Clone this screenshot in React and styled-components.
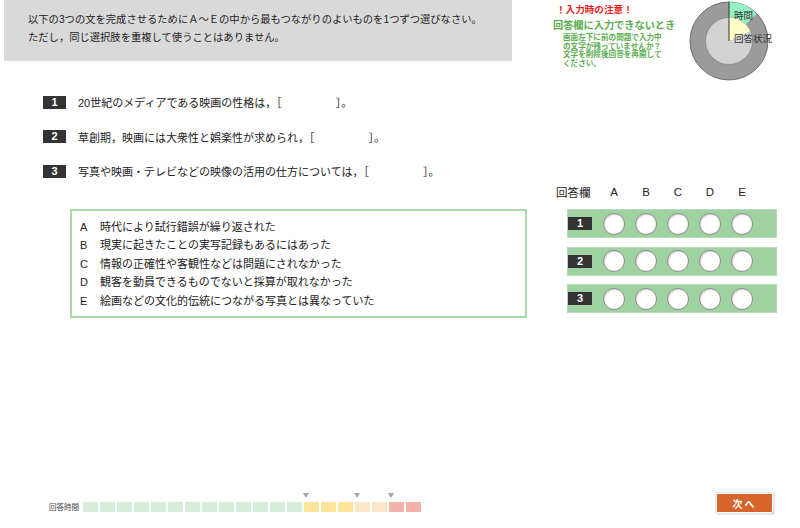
import React from 'react'
import styled, { createGlobalStyle } from 'styled-components'

const GlobalStyle = createGlobalStyle`
 html, body {
  margin: 0;
  padding: 0;
  background: #fff;
 }
 body {
  font-family: "Liberation Sans", "Noto Sans CJK JP", sans-serif;
  color: #222;
 }
`

const questions = [
 { no: 1, text: '20世紀のメディアである映画の性格は，［', tail: '］。' },
 { no: 2, text: '草創期，映画には大衆性と娯楽性が求められ，［', tail: '］。' },
 { no: 3, text: '写真や映画・テレビなどの映像の活用の仕方については，［', tail: '］。' },
]

const options = [
 ['A', '時代により試行錯誤が繰り返された'],
 ['B', '現実に起きたことの実写記録もあるにはあった'],
 ['C', '情報の正確性や客観性などは問題にされなかった'],
 ['D', '観客を動員できるものでないと採算が取れなかった'],
 ['E', '絵画などの文化的伝統につながる写真とは異なっていた'],
]

// 20 cells: green, then yellow, peach, red
const timeCells = [
 ...Array(13).fill('green'),
 ...Array(3).fill('yellow'),
 ...Array(2).fill('peach'),
 ...Array(2).fill('red'),
]
const marks = [13, 16, 18]

const cellColors = {
 green: '#d8ecda',
 yellow: '#fde69c',
 peach: '#fde6c9',
 red: '#f4b3aa',
}

const App = () => {
 return (
  <Page>
   <GlobalStyle />
   <Top>
    <Instruction>
     以下の3つの文を完成させるためにＡ～Ｅの中から最もつながりのよいものを1つずつ選びなさい。
     <br />
     ただし，同じ選択肢を重複して使うことはありません。
    </Instruction>
    <Notice>
     <NoticeTitle>！入力時の注意！</NoticeTitle>
     <NoticeHead>回答欄に入力できないとき</NoticeHead>
     <NoticeBody>
      画面左下に前の問題で入力中
      <br />
      の文字が残っていませんか？
      <br />
      文字を削除後回答を再開して
      <br />
      ください。
     </NoticeBody>
    </Notice>
    <Donut width="90" height="82" viewBox="0 0 90 82">
     <circle cx="40" cy="41" r="39" fill="#9b9b9b" stroke="#555" strokeWidth="0.8" />
     <path d="M40 2 A39 39 0 0 1 67.58 13.42 L56.62 24.38 A23.5 23.5 0 0 0 40 17.5 Z" fill="#93f2c2" />
     <circle cx="40" cy="41" r="23.5" fill="#d2d2d2" stroke="#7a7a7a" strokeWidth="0.6" />
     <path d="M40 41 L40 17.5 A23.5 23.5 0 0 1 61.3 31.06 Z" fill="#fdfdc4" />
     <line x1="40" y1="41" x2="40" y2="2" stroke="#222" strokeWidth="0.9" />
     <text x="45" y="18.5" fontSize="9.5" fill="#333">時間</text>
     <text x="45" y="41.5" fontSize="9.5" fill="#333">回答状況</text>
    </Donut>
   </Top>

   <Main>
    <Left>
     {questions.map((q) => (
      <QuestionRow key={q.no}>
       <NumBox>{q.no}</NumBox>
       <QuestionText>
        {q.text}
        <Blank />
        {q.tail}
       </QuestionText>
      </QuestionRow>
     ))}
     <OptionBox>
      {options.map(([k, t]) => (
       <OptionRow key={k}>
        <OptionKey>{k}</OptionKey>
        <span>{t}</span>
       </OptionRow>
      ))}
     </OptionBox>
    </Left>

    <Right>
     <GridHead>
      <GridLabel>回答欄</GridLabel>
      {['A', 'B', 'C', 'D', 'E'].map((l) => (
       <GridLetter key={l}>{l}</GridLetter>
      ))}
     </GridHead>
     {[1, 2, 3].map((n) => (
      <AnswerBar key={n}>
       <BarNum>{n}</BarNum>
       <Circles>
        {[0, 1, 2, 3, 4].map((i) => (
         <Circle key={i} />
        ))}
       </Circles>
      </AnswerBar>
     ))}
    </Right>
   </Main>

   <Footer>
    <Timer>
     <TimerLabel>回答時間</TimerLabel>
     <Cells>
      {timeCells.map((c, i) => (
       <Cell key={i} $color={cellColors[c]} $mark={marks.includes(i)} />
      ))}
     </Cells>
    </Timer>
    <NextButton type="button">次へ</NextButton>
   </Footer>
  </Page>
 )
}

const Page = styled.div`
 width: 800px;
 height: 528px;
 display: flex;
 flex-direction: column;
 overflow: hidden;
`

const Top = styled.div`
 display: flex;
 align-items: flex-start;
 height: 61px;
`

const Instruction = styled.div`
 margin-left: 4px;
 width: 508px;
 height: 61px;
 box-sizing: border-box;
 background: #d9d9d9;
 padding: 11px 0 0 24px;
 font-size: 10.3px;
 line-height: 18px;
 color: #222;
 white-space: nowrap;
`

const Notice = styled.div`
 margin-left: 41px;
 padding-top: 4px;
 width: 135px;
`

const NoticeTitle = styled.div`
 color: #ee1c1c;
 font-weight: bold;
 font-size: 9.6px;
 line-height: 12px;
 padding-left: 3px;
`

const NoticeHead = styled.div`
 color: #5aae4e;
 font-weight: bold;
 font-size: 10.2px;
 line-height: 16px;
 margin-top: 2px;
 white-space: nowrap;
`

const NoticeBody = styled.div`
 color: #5aae4e;
 font-weight: bold;
 font-size: 7.6px;
 line-height: 8.7px;
 padding-left: 10px;
 white-space: nowrap;
`

const Donut = styled.svg`
 margin-left: 1px;
 display: block;
 overflow: visible;
`

const Main = styled.div`
 display: flex;
 align-items: flex-start;
`

const Left = styled.div`
 width: 556px;
 padding: 24px 0 0 43px;
 box-sizing: border-box;
`

const QuestionRow = styled.div`
 display: flex;
 align-items: center;
 height: 34.5px;
`

const NumBox = styled.div`
 width: 23px;
 height: 13px;
 background: #333;
 color: #fff;
 font-weight: bold;
 font-size: 11px;
 line-height: 13px;
 text-align: center;
 margin-right: 12px;
`

const QuestionText = styled.div`
 font-size: 11px;
 color: #222;
 white-space: nowrap;
`

const Blank = styled.span`
 display: inline-block;
 width: 54px;
`

const OptionBox = styled.div`
 margin: 20px 0 0 27px;
 width: 457px;
 height: 109px;
 box-sizing: border-box;
 border: 2px solid #a9d9a9;
 padding: 7px 0 0 8px;
`

const OptionRow = styled.div`
 display: flex;
 font-size: 11px;
 line-height: 18.5px;
 color: #222;
`

const OptionKey = styled.span`
 width: 20px;
`

const Right = styled.div`
 padding-top: 124px;
 width: 222px;
`

const GridHead = styled.div`
 display: flex;
 align-items: center;
 height: 14px;
 margin-bottom: 10px;
 font-size: 11.5px;
 color: #222;
`

const GridLabel = styled.div`
 width: 42px;
`

const GridLetter = styled.div`
 width: 32px;
 text-align: center;
`

const AnswerBar = styled.div`
 margin-left: 11px;
 width: 210px;
 height: 29px;
 box-sizing: border-box;
 background: #9fd1a1;
 border: 1px solid #b6dcb7;
 display: flex;
 align-items: center;
 margin-bottom: 8.5px;
`

const BarNum = styled.div`
 width: 24px;
 height: 13px;
 background: #333;
 color: #fff;
 font-weight: bold;
 font-size: 11px;
 line-height: 13px;
 text-align: center;
`

const Circles = styled.div`
 display: flex;
 gap: 10px;
 margin-left: 11px;
`

const Circle = styled.div`
 width: 22px;
 height: 22px;
 box-sizing: border-box;
 border-radius: 50%;
 background: #fff;
 border: 1px solid #8a8a8a;
 box-shadow: inset 1px 1px 1px rgba(0, 0, 0, 0.15);
`

const Footer = styled.div`
 margin-top: auto;
 display: flex;
 align-items: flex-end;
 justify-content: space-between;
 padding: 0 27px 15px 0;
`

const Timer = styled.div`
 display: flex;
 align-items: center;
 margin-bottom: 1px;
`

const TimerLabel = styled.div`
 font-size: 7.5px;
 color: #444;
 width: 34px;
 margin-left: 49px;
 white-space: nowrap;
`

const Cells = styled.div`
 display: flex;
 gap: 2px;
`

const Cell = styled.div`
 position: relative;
 width: 15px;
 height: 10px;
 background: ${(p) => p.$color};
 ${(p) =>
  p.$mark &&
  `
  &::before {
   content: '';
   position: absolute;
   left: -1px;
   top: -9px;
   border-left: 3.5px solid transparent;
   border-right: 3.5px solid transparent;
   border-top: 5px solid #a6a6a6;
  }
 `}
`

const NextButton = styled.button`
 width: 57px;
 height: 20px;
 box-sizing: border-box;
 background: #d5652a;
 color: #fff;
 font-weight: bold;
 font-size: 10px;
 font-family: "Liberation Sans", "Noto Sans CJK JP", sans-serif;
 border: 1px solid #fff;
 outline: 1px solid #e6e6e6;
 box-shadow: 1px 1px 2px rgba(0, 0, 0, 0.35);
 border-radius: 2px;
 padding: 0;
 letter-spacing: 2px;
`

export default App
